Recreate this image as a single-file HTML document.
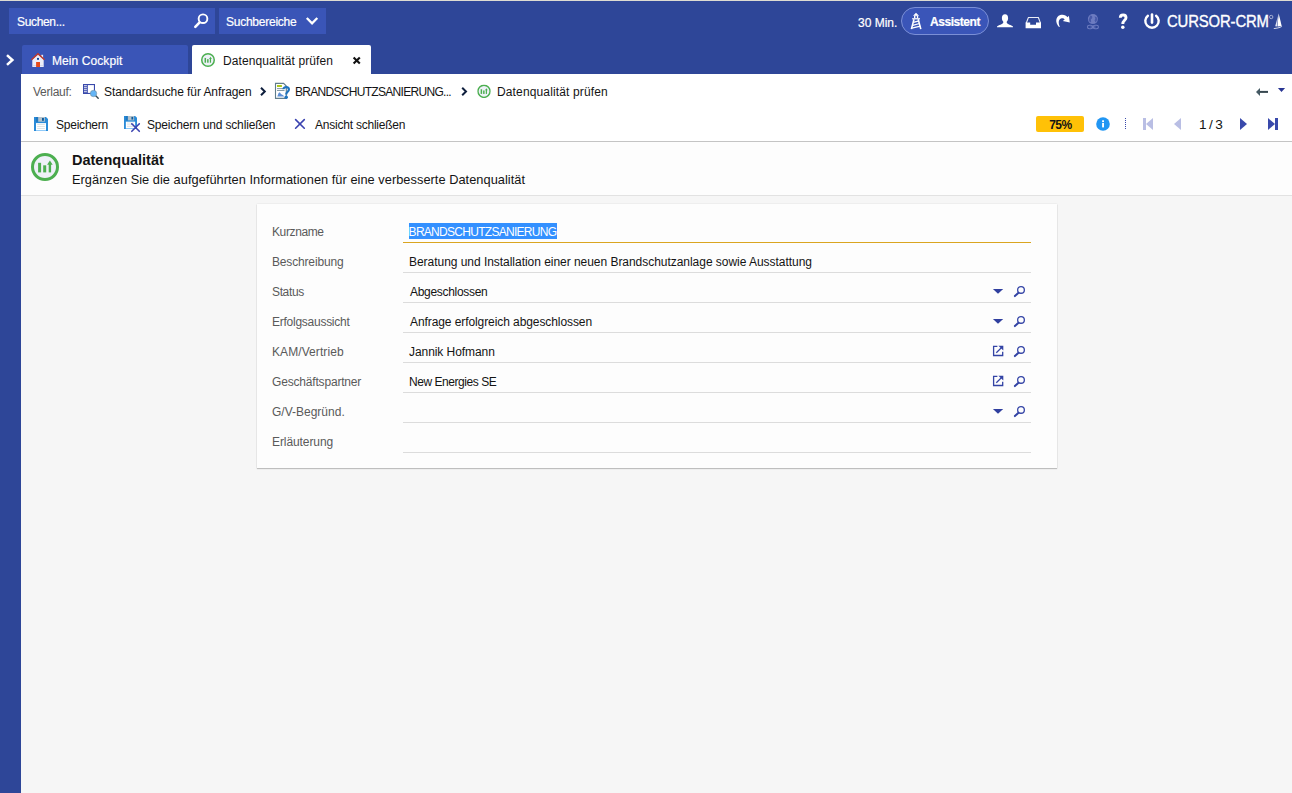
<!DOCTYPE html>
<html lang="de">
<head>
<meta charset="utf-8">
<title>CURSOR-CRM</title>
<style>
*{box-sizing:border-box;margin:0;padding:0}
html,body{width:1292px;height:793px;overflow:hidden;background:#f6f6f6}
body{font-family:"Liberation Sans",sans-serif;font-size:12px;color:#141414;position:relative}
.abs{position:absolute}
.t{position:absolute;white-space:nowrap;line-height:16px;height:16px;font-size:12px}
.w{color:#fff;-webkit-text-stroke:.2px #fff}
#topline{left:0;top:0;width:1292px;height:1px;background:#dddbd2}
#header{left:0;top:1px;width:1292px;height:73px;background:#2e4698}
#sidebar{left:0;top:74px;width:21px;height:719px;background:#2e4698}
#search{left:9px;top:8px;width:206px;height:26px;background:#3a55b7}
#areas{left:219px;top:8px;width:107px;height:26px;background:#3a55b7}
#tab1{left:22px;top:45px;width:166px;height:29px;background:#3a55b7;border-radius:2px 2px 0 0}
#tab2{left:192px;top:45px;width:179px;height:29px;background:#fff;border-radius:2px 2px 0 0}
#bar{left:21px;top:74px;width:1271px;height:67px;background:#fff}
#barline{left:21px;top:141px;width:1271px;height:1px;background:#c4c4c4}
#titlebar{left:21px;top:142px;width:1271px;height:53px;background:#fdfdfd}
#titleline{left:21px;top:195px;width:1271px;height:1px;background:#e2e2e2}
#card{left:257px;top:204px;width:800px;height:264px;background:#fdfdfd;box-shadow:0 1px 1px rgba(0,0,0,.2),0 0 1.5px rgba(0,0,0,.12)}
.lbl{color:#5a5a5a;left:272px}
.val{color:#141414;left:409px}
.ul{position:absolute;left:403px;width:628px;height:1px;background:#dcdcdc}
/*FIT*/
#t_suchen{left:17.00px;letter-spacing:-0.337px}
#t_areas{left:226.00px;letter-spacing:-0.245px}
#t_min{left:858.00px;letter-spacing:-0.000px}
#t_assist{left:930.00px;letter-spacing:-0.451px}
#t_crm{left:1167.00px;letter-spacing:-0.160px}
#t_cockpit{left:52.00px;letter-spacing:0.082px}
#t_tab2{left:223.00px;letter-spacing:0.095px}
#t_verlauf{left:33.00px;letter-spacing:-0.258px}
#t_bc1{left:104.00px;letter-spacing:-0.072px}
#t_bc2{left:295.00px;letter-spacing:-0.697px}
#t_bc3{left:497.00px;letter-spacing:0.142px}
#t_save{left:56.00px;letter-spacing:-0.225px}
#t_saveclose{left:147.00px;letter-spacing:-0.163px}
#t_close{left:315.00px;letter-spacing:-0.225px}
#t_page{left:1199.00px;letter-spacing:2.475px}
#t_title{left:72.00px;letter-spacing:-0.002px}
#t_sub{left:72.00px;letter-spacing:0.035px}
#l1{left:272.00px;letter-spacing:-0.386px}
#l2{left:272.00px;letter-spacing:-0.163px}
#l3{left:272.00px;letter-spacing:-0.360px}
#l4{left:272.00px;letter-spacing:-0.257px}
#l5{left:272.00px;letter-spacing:0.082px}
#l6{left:272.00px;letter-spacing:-0.180px}
#l7{left:272.00px;letter-spacing:-0.000px}
#l8{left:272.00px;letter-spacing:-0.090px}
#v1{left:408.60px;letter-spacing:-0.716px}
#v2{left:409.00px;letter-spacing:-0.037px}
#v3{left:410.00px;letter-spacing:-0.300px}
#v4{left:410.00px;letter-spacing:-0.084px}
#v5{left:409.00px;letter-spacing:-0.069px}
#v6{left:409.00px;letter-spacing:-0.450px}
#t_pct{left:1049.20px;letter-spacing:-0.540px}
/*ENDFIT*/
</style>
</head>
<body>
<div class="abs" id="header"></div>
<div class="abs" id="topline"></div>
<div class="abs" id="sidebar"></div>
<div class="abs" id="search"></div>
<div class="abs" id="areas"></div>
<div class="abs" id="tab1"></div>
<div class="abs" id="tab2"></div>
<div class="abs" id="bar"></div>
<div class="abs" id="barline"></div>
<div class="abs" id="titlebar"></div>
<div class="abs" id="titleline"></div>
<div class="abs" id="card"></div>

<svg class="abs" id="icons" style="left:0;top:0" width="1292" height="793" viewBox="0 0 1292 793">
<defs>
<symbol id="dq" viewBox="0 0 28 28">
<circle cx="14" cy="14" r="12.5" fill="#eef1f8" stroke="#4caf50" stroke-width="3"/>
<rect x="7.1" y="9.8" width="3" height="9.6" fill="#4caf50"/>
<rect x="12.2" y="12.3" width="3" height="7.1" fill="#4caf50"/>
<rect x="17.7" y="11" width="2.4" height="8.4" fill="#4caf50"/>
<polygon points="18.9,7.6 21.7,11.8 16.1,11.8" fill="#4caf50"/>
</symbol>
<symbol id="floppy" viewBox="0 0 14 14">
<path d="M0,0H12L14,2V14H0Z" fill="#2a8bd8"/>
<rect x="1.9" y="0" width="2.3" height="4.7" fill="#1f78c0"/>
<rect x="4.2" y="0" width="6.7" height="4.7" fill="#b4c2cc"/>
<rect x="8" y="1" width="1.9" height="2.8" fill="#0d5a9a"/>
<rect x="2" y="6.1" width="10" height="6.9" fill="#fff"/>
<rect x="3.2" y="7.2" width="7.6" height=".7" fill="#cfd8dc"/>
<rect x="3.2" y="9.2" width="7.6" height=".7" fill="#cfd8dc"/>
<rect x="3.2" y="11.2" width="7.6" height=".7" fill="#cfd8dc"/>
<rect x="2" y="13" width="10" height="1" fill="#90caf9"/>
</symbol>
<symbol id="mag" viewBox="0 0 12 12" overflow="visible">
<circle cx="8" cy="3.9" r="3.35" fill="none" stroke="#3343a5" stroke-width="1.3"/>
<line x1="5.5" y1="6.8" x2="1.9" y2="10.1" stroke="#3343a5" stroke-width="2" stroke-linecap="round"/>
</symbol>
<symbol id="ext" viewBox="0 0 12 12" overflow="visible">
<path d="M5.4,1.3H1.6V10.5H10.7V6.8" fill="none" stroke="#3343a5" stroke-width="1.3"/>
<line x1="4.3" y1="7.8" x2="10" y2="2.1" stroke="#3343a5" stroke-width="1.3"/>
<polygon points="6.4,0.7 11.3,0.7 11.3,5.6" fill="#3343a5"/>
</symbol>
</defs>

<!-- sidebar chevron -->
<polyline points="7,55.1 12.4,60 7,64.9" fill="none" stroke="#fff" stroke-width="2.5"/>
<!-- search magnifier -->
<circle cx="203" cy="18.7" r="4.35" fill="none" stroke="#fff" stroke-width="1.9"/>
<line x1="199.4" y1="22.6" x2="195.3" y2="26.9" stroke="#fff" stroke-width="2.6" stroke-linecap="round"/>
<!-- areas chevron -->
<polyline points="306.8,18 312.05,23.4 317.3,18" fill="none" stroke="#fff" stroke-width="2.3" stroke-linejoin="miter"/>
<!-- assistant pill -->
<rect x="901.5" y="7.5" width="87" height="27" rx="13.5" fill="#3a55b8" stroke="#7b8fd6" stroke-width="1"/>
<!-- lighthouse -->
<g fill="#fff" stroke="none">
<polygon points="916,12.7 919,15.7 913,15.7"/>
<rect x="914" y="15.6" width="4.2" height="2.7"/>
<rect x="912.1" y="18.2" width="7.9" height="1.2"/>
</g>
<rect x="915.3" y="16.2" width="1.7" height="1.7" fill="#3a55b8"/>
<g fill="none" stroke="#fff" stroke-width="1.6">
<line x1="914" y1="19.3" x2="911.4" y2="29.1"/>
<line x1="918.2" y1="19.3" x2="920.8" y2="29.1"/>
</g>
<g fill="none" stroke="#fff" stroke-width="1.2">
<line x1="913.4" y1="22.4" x2="918.9" y2="20.9"/>
<line x1="912.7" y1="25.4" x2="919.6" y2="23.5"/>
<line x1="911.9" y1="28.2" x2="920.4" y2="26.2"/>
</g>
<!-- person -->
<ellipse cx="1005" cy="18.1" rx="3.1" ry="3.9" fill="#fff"/>
<path d="M997,27.3V26.4C998.6,25 1002.6,24.2 1003.3,22.4V20.8H1006.7V22.4C1007.4,24.2 1011.4,25 1013,26.4V27.3Z" fill="#fff"/>
<!-- inbox -->
<path d="M1026.2,23.2L1028.4,17.5H1038.4L1040.5,23.2" fill="none" stroke="#fff" stroke-width="1.1" opacity=".9"/>
<path d="M1025.6,22.6H1030.2V24.7H1036V22.6H1041V28.2H1025.6Z" fill="#fff"/>
<!-- redo -->
<path d="M1059,27C1055,22.8 1055.4,16.8 1060.2,15C1063.3,14 1066.2,15.2 1067.5,17.3L1068.9,15.8L1069.8,22.4L1062.8,21L1064.7,19.6C1063.8,18.2 1062.4,17.9 1061,18.5C1058.3,19.7 1058.2,23.5 1059.9,26.7Z" fill="#fff"/>
<!-- globe (dim) -->
<g opacity=".9">
<circle cx="1092.9" cy="19.1" r="5" fill="#7482c6"/>
<path d="M1090.2,15.5l1.8,.6l.3,1.8l-1.5,1.6l.4,2l-1.2,.9l-1.4,-2.4zM1094.5,16.2l2.2,1l.6,2.6l-1.6,2.6l-1.2,-1.8l.8,-1.8z" fill="#4a5cab"/>
<rect x="1087.5" y="25.3" width="5.2" height="3.4" rx="1.7" fill="none" stroke="#7482c6" stroke-width="1.1"/>
<rect x="1093.2" y="25.3" width="5.2" height="3.4" rx="1.7" fill="none" stroke="#7482c6" stroke-width="1.1"/>
<line x1="1090.5" y1="27" x2="1095.5" y2="27" stroke="#7482c6" stroke-width="1.1"/>
</g>
<!-- question -->
<path d="M1120.3,17.7C1120.3,14 1126,14 1126,17.7C1126,20.3 1122.8,20.5 1122.8,24" fill="none" stroke="#fff" stroke-width="2.9"/>
<circle cx="1122.8" cy="27.2" r="1.75" fill="#fff"/>
<!-- power -->
<path d="M1156.1,15.7A6.7,6.7 0 1 1 1147.9,15.7" fill="none" stroke="#fff" stroke-width="2.4" stroke-linecap="round"/>
<line x1="1152" y1="14.6" x2="1152" y2="22.6" stroke="#fff" stroke-width="2.6" stroke-linecap="round"/>
<!-- registered + sailboat -->
<circle cx="1271.2" cy="17" r="1.7" fill="none" stroke="#fff" stroke-width=".9" opacity=".6"/>
<polygon points="1278.6,13.2 1281.7,26 1277.6,26.6" fill="#fff"/>
<polygon points="1278,16 1277.2,26.4 1275.2,26.2" fill="#fff" opacity=".85"/>
<path d="M1273.8,27.9Q1278,28.1 1282.2,25.9L1281.6,27.1Q1278,29 1273.8,28.7Z" fill="#fff"/>

<!-- house -->
<polygon points="32.3,59.6 38,54.4 43.7,59.6 43.7,67 32.3,67" fill="#eceef8"/>
<rect x="41.3" y="54.8" width="1.8" height="3.4" fill="#eceef8"/>
<rect x="32.3" y="65.2" width="11.4" height=".9" fill="#c5cae9" opacity=".7"/>
<polyline points="31.5,59.7 38,53.8 44.5,59.7" fill="none" stroke="#c0392b" stroke-width="1.5"/>
<rect x="36.1" y="62" width="3.9" height="5" fill="#e64a19"/>
<rect x="37" y="57.9" width="2" height="1.9" fill="#0d47a1"/>
<!-- tab icon -->
<use href="#dq" x="201" y="53" width="14" height="14"/>
<!-- tab close -->
<g stroke="#111" stroke-width="2.1">
<line x1="353.6" y1="57.4" x2="359.8" y2="63.6"/>
<line x1="359.8" y1="57.4" x2="353.6" y2="63.6"/>
</g>

<!-- breadcrumb: list-search -->
<rect x="83.55" y="84.55" width="10.9" height="8.9" fill="#fff" stroke="#3949ab" stroke-width="1.1"/>
<rect x="83" y="84" width="4.8" height="10" fill="#3949ab"/>
<g fill="#fff"><rect x="84" y="85.3" width="2.9" height=".9"/><rect x="84" y="87.3" width="2.9" height=".9"/><rect x="84" y="89.3" width="2.9" height=".9"/><rect x="84" y="91.3" width="2.9" height=".9"/></g>
<line x1="95.8" y1="95.8" x2="98.2" y2="98.2" stroke="#37474f" stroke-width="1.4" stroke-linecap="round"/>
<circle cx="93.5" cy="93.5" r="3.2" fill="#64b5f6" stroke="#78909c" stroke-width=".6"/>
<!-- chevrons -->
<polyline points="261,87.7 264.8,91.5 261,95.3" fill="none" stroke="#0f1f3d" stroke-width="2"/>
<polyline points="462.2,87.7 466,91.5 462.2,95.3" fill="none" stroke="#0f1f3d" stroke-width="2"/>
<!-- doc icon -->
<path d="M275.5,83.4H283.6L286.3,86V98.4H275.5Z" fill="#fff" stroke="#607d8b" stroke-width="1.1"/>
<rect x="277" y="85.1" width="4.9" height="1.8" fill="#a4c400"/>
<line x1="277" y1="88.6" x2="283" y2="88.6" stroke="#78909c" stroke-width=".9"/>
<line x1="277" y1="90.5" x2="284.5" y2="90.5" stroke="#78909c" stroke-width=".9"/>
<polygon points="277.3,96.6 278.6,93 279.8,92.2 281,94 283.2,95.2 284.2,96.6" fill="#5c8fd6"/>
<path d="M283.5,89.2C283.5,86.3 288.9,86.3 288.9,89.4C288.9,91.8 286.2,91.8 286.2,94.5" fill="none" stroke="#1e73be" stroke-width="2.2"/>
<circle cx="286.2" cy="97.2" r="1.75" fill="#1e73be"/>
<!-- breadcrumb dq -->
<use href="#dq" x="477.2" y="84.5" width="13.6" height="13.6"/>
<!-- back arrow + triangle -->
<polygon points="1256,91.9 1260,88 1260,95.9" fill="#455a64"/>
<rect x="1259.8" y="90.9" width="8.2" height="2" fill="#37474f"/>
<polygon points="1277.9,88 1285.1,88 1281.5,92.1" fill="#283593"/>

<!-- toolbar -->
<use href="#floppy" x="34" y="117" width="14" height="14"/>
<use href="#floppy" x="124" y="116" width="13" height="13"/>
<g stroke="#3b43b0" stroke-width="1.6" stroke-linecap="round">
<line x1="131.8" y1="123.8" x2="139.3" y2="131.3"/><line x1="139.3" y1="123.8" x2="131.8" y2="131.3"/>
<line x1="295.6" y1="119.6" x2="304.3" y2="128.2"/><line x1="304.3" y1="119.6" x2="295.6" y2="128.2"/>
</g>
<!-- badge -->
<rect x="1036" y="116" width="48" height="16" rx="2" fill="#ffc107"/>
<!-- info -->
<circle cx="1103" cy="124" r="6.8" fill="#2196f3"/>
<rect x="1102.1" y="120.3" width="1.9" height="1.8" fill="#fff"/>
<rect x="1102.1" y="123" width="1.9" height="4.4" fill="#fff"/>
<!-- dotted sep -->
<g fill="#3949ab"><rect x="1125" y="118" width="1" height="1"/><rect x="1125" y="120" width="1" height="1"/><rect x="1125" y="122" width="1" height="1"/><rect x="1125" y="124" width="1" height="1"/><rect x="1125" y="126" width="1" height="1"/><rect x="1125" y="128" width="1" height="1"/></g>
<!-- nav -->
<g fill="#b9bee4">
<rect x="1143" y="118" width="3" height="12"/><polygon points="1153,118 1153,130 1146,124"/>
<polygon points="1181,118 1181,130 1174,124"/>
</g>
<g fill="#3949ab">
<polygon points="1240,118 1240,130 1247,124"/>
<polygon points="1268,118 1268,130 1275,124"/><rect x="1275" y="118" width="3" height="12"/>
</g>
<!-- title icon -->
<use href="#dq" x="31" y="153" width="28" height="28"/>

<!-- form icons -->
<g fill="#303f9f">
<polygon points="992.9,289 1003.2,289 998,293.7"/>
<polygon points="992.9,319 1003.2,319 998,323.7"/>
<polygon points="992.9,409 1003.2,409 998,413.7"/>
</g>
<use href="#ext" x="992" y="345" width="12" height="12"/>
<use href="#ext" x="992" y="375" width="12" height="12"/>
<use href="#mag" x="1013" y="286" width="12" height="12"/>
<use href="#mag" x="1013" y="316" width="12" height="12"/>
<use href="#mag" x="1013" y="346" width="12" height="12"/>
<use href="#mag" x="1013" y="376" width="12" height="12"/>
<use href="#mag" x="1013" y="406" width="12" height="12"/>
</svg>

<!-- header text -->
<span class="t w" id="t_suchen" style="top:14px">Suchen...</span>
<span class="t w" id="t_areas" style="top:14px">Suchbereiche</span>
<span class="t w" id="t_min" style="top:15px">30 Min.</span>
<span class="t w" id="t_assist" style="top:14px;font-weight:bold">Assistent</span>
<span class="t w" id="t_crm" style="top:12px;font-size:16px;transform:scaleX(.93);transform-origin:0 0;-webkit-text-stroke:.35px #fff;line-height:20px;height:20px">CURSOR-CRM</span>
<span class="t w" id="t_cockpit" style="top:53px">Mein Cockpit</span>
<span class="t" id="t_tab2" style="top:53px">Datenqualität prüfen</span>

<!-- breadcrumb -->
<span class="t" id="t_verlauf" style="top:84px;color:#5a5a5a">Verlauf:</span>
<span class="t" id="t_bc1" style="top:84px">Standardsuche für Anfragen</span>
<span class="t" id="t_bc2" style="top:84px">BRANDSCHUTZSANIERUNG...</span>
<span class="t" id="t_bc3" style="top:84px">Datenqualität prüfen</span>

<!-- toolbar -->
<span class="t" id="t_save" style="top:117px">Speichern</span>
<span class="t" id="t_saveclose" style="top:117px">Speichern und schließen</span>
<span class="t" id="t_close" style="top:117px">Ansicht schließen</span>
<span class="t" id="t_pct" style="top:117px;font-weight:bold;font-size:12px">75%</span>
<span class="t" id="t_page" style="top:116px;font-size:13.6px;line-height:18px;height:18px">1/3</span>

<!-- title -->
<span class="t" id="t_title" style="top:151px;font-size:14.5px;font-weight:bold;line-height:18px;height:18px">Datenqualität</span>
<span class="t" id="t_sub" style="top:172px;font-size:12.8px">Ergänzen Sie die aufgeführten Informationen für eine verbesserte Datenqualität</span>

<!-- form -->
<span class="t lbl" id="l1" style="top:224px">Kurzname</span>
<span class="t lbl" id="l2" style="top:254px">Beschreibung</span>
<span class="t lbl" id="l3" style="top:284px">Status</span>
<span class="t lbl" id="l4" style="top:314px">Erfolgsaussicht</span>
<span class="t lbl" id="l5" style="top:344px">KAM/Vertrieb</span>
<span class="t lbl" id="l6" style="top:374px">Geschäftspartner</span>
<span class="t lbl" id="l7" style="top:404px">G/V-Begründ.</span>
<span class="t lbl" id="l8" style="top:434px">Erläuterung</span>

<div class="abs" id="sel" style="left:409px;top:223px;width:148px;height:16px;background:#3390ff"></div>
<span class="t val" id="v1" style="top:224px;color:#fff">BRANDSCHUTZSANIERUNG</span>
<span class="t val" id="v2" style="top:254px">Beratung und Installation einer neuen Brandschutzanlage sowie Ausstattung</span>
<span class="t val" id="v3" style="top:284px">Abgeschlossen</span>
<span class="t val" id="v4" style="top:314px">Anfrage erfolgreich abgeschlossen</span>
<span class="t val" id="v5" style="top:344px">Jannik Hofmann</span>
<span class="t val" id="v6" style="top:374px">New Energies SE</span>

<div class="ul" style="top:242px;background:#daa520"></div>
<div class="ul" style="top:272px"></div>
<div class="ul" style="top:302px"></div>
<div class="ul" style="top:332px"></div>
<div class="ul" style="top:362px"></div>
<div class="ul" style="top:392px"></div>
<div class="ul" style="top:422px"></div>
<div class="ul" style="top:452px"></div>
</body>
</html>
